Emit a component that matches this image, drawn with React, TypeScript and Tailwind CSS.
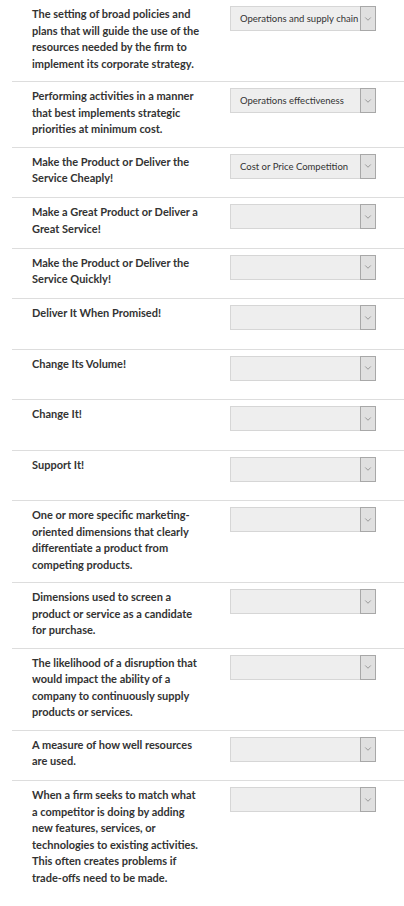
import { ChevronDown } from "lucide-react";

const rows: { text: string; value?: string }[] = [
  {
    text: "The setting of broad policies and plans that will guide the use of the resources needed by the firm to implement its corporate strategy.",
    value: "Operations and supply chain",
  },
  {
    text: "Performing activities in a manner that best implements strategic priorities at minimum cost.",
    value: "Operations effectiveness",
  },
  { text: "Make the Product or Deliver the Service Cheaply!", value: "Cost or Price Competition" },
  { text: "Make a Great Product or Deliver a Great Service!" },
  { text: "Make the Product or Deliver the Service Quickly!" },
  { text: "Deliver It When Promised!" },
  { text: "Change Its Volume!" },
  { text: "Change It!" },
  { text: "Support It!" },
  {
    text: "One or more specific marketing-oriented dimensions that clearly differentiate a product from competing products.",
  },
  { text: "Dimensions used to screen a product or service as a candidate for purchase." },
  {
    text: "The likelihood of a disruption that would impact the ability of a company to continuously supply products or services.",
  },
  { text: "A measure of how well resources are used." },
  {
    text: "When a firm seeks to match what a competitor is doing by adding new features, services, or technologies to existing activities. This often creates problems if trade-offs need to be made.",
  },
];

function Select({ value }: { value?: string }) {
  return (
    <div className="flex h-[25px] w-[146px] mb-[9.5px] border border-[#d6d6d6] bg-[#eeeeee]">
      <div className="flex-1 min-w-0 overflow-hidden whitespace-nowrap pl-[9px] text-[9.5px] leading-[23px] text-[#333]">
        {value ?? ""}
      </div>
      <div className="w-[16px] flex items-center justify-center border border-[#a8a8a8] bg-[#e0e0e0] -my-px -mr-px">
        <ChevronDown size={10} strokeWidth={1.25} className="text-[#555]" />
      </div>
    </div>
  );
}

export default function App() {
  return (
    <div
      className="min-h-screen bg-white pl-3 pb-3"
      style={{ fontFamily: "Lato, 'Noto Sans', sans-serif" }}
    >
      {rows.map((row, i) => (
        <div
          key={i}
          className={`flex pt-[6px] pb-[9px] ${i > 0 ? "border-t border-[#dddddd]" : ""}`}
        >
          <div className="w-[168px] ml-5 text-[11px] leading-[16.5px] font-bold text-[#333]">
            {row.text}
          </div>
          <div className="ml-[30px]">
            <Select value={row.value} />
          </div>
        </div>
      ))}
    </div>
  );
}
